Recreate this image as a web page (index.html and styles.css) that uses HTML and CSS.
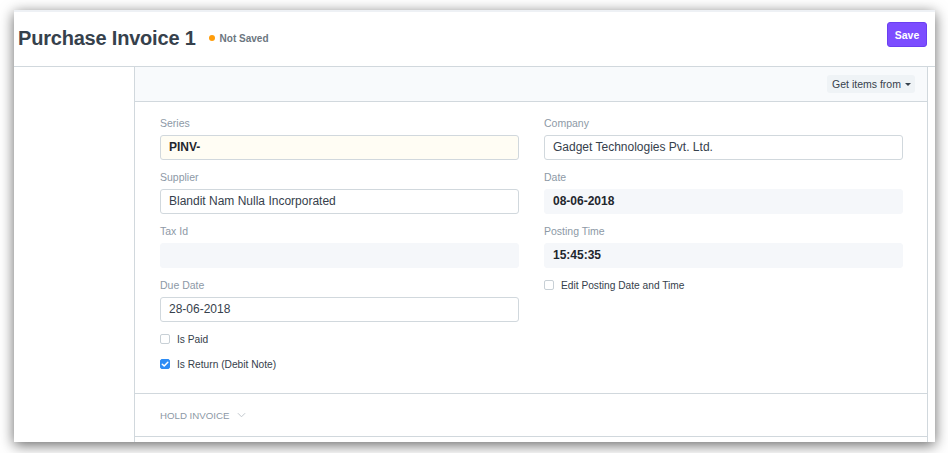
FILE: index.html
```html
<!DOCTYPE html>
<html>
<head>
<meta charset="utf-8">
<link rel="stylesheet" href="styles.css">
</head>
<body>
<div class="window">
  <header class="page-head">
    <div class="title-wrap">
      <h1 class="title">Purchase Invoice 1</h1>
      <span class="indicator"><span class="dot"></span>Not Saved</span>
    </div>
    <button class="btn-primary">Save</button>
  </header>
  <div class="page-body">
    <aside class="sidebar"></aside>
    <main class="layout-main">
      <div class="form-toolbar">
        <button class="btn-default">Get items from <span class="caret"></span></button>
      </div>
      <section class="form-section">
        <div class="col">
          <div class="field">
            <div class="label">Series</div>
            <div class="input input-req bold">PINV-</div>
          </div>
          <div class="field">
            <div class="label">Supplier</div>
            <div class="input">Blandit Nam Nulla Incorporated</div>
          </div>
          <div class="field">
            <div class="label">Tax Id</div>
            <div class="input input-ro"></div>
          </div>
          <div class="field">
            <div class="label">Due Date</div>
            <div class="input">28-06-2018</div>
          </div>
          <div class="check-row"><span class="checkbox"></span>Is Paid</div>
          <div class="check-row"><span class="checkbox checked"><svg viewBox="0 0 10 10" width="10" height="10"><path d="M2.3 5.2 L4.2 7 L7.8 3.2" fill="none" stroke="#fff" stroke-width="1.5" stroke-linecap="round" stroke-linejoin="round"/></svg></span>Is Return (Debit Note)</div>
        </div>
        <div class="col">
          <div class="field">
            <div class="label">Company</div>
            <div class="input">Gadget Technologies Pvt. Ltd.</div>
          </div>
          <div class="field">
            <div class="label">Date</div>
            <div class="input input-ro bold">08-06-2018</div>
          </div>
          <div class="field">
            <div class="label">Posting Time</div>
            <div class="input input-ro bold">15:45:35</div>
          </div>
          <div class="check-row"><span class="checkbox"></span>Edit Posting Date and Time</div>
        </div>
      </section>
      <section class="collapsed-section">
        <span class="section-head">HOLD INVOICE</span>
        <svg class="chevron" viewBox="0 0 10 6" width="9" height="6"><path d="M1 1 L5 5 L9 1" fill="none" stroke="#c0c6cc" stroke-width="1.1"/></svg>
      </section>
      <section class="next-section"></section>
    </main>
    <div class="gutter"></div>
  </div>
</div>
</body>
</html>
```
FILE: styles.css
```css
* { box-sizing: border-box; }
html, body { margin: 0; padding: 0; background: #ffffff; }
body {
  font-family: "Liberation Sans", Arial, sans-serif;
  color: #36414c;
  width: 948px;
  height: 453px;
  overflow: hidden;
}
.window {
  margin: 10px 0 0 14px;
  width: 921px;
  height: 432px;
  background: #fff;
  border-top: 2px solid #eef1f5;
  box-shadow: 0 3px 13px rgba(0, 0, 0, 0.6);
  overflow: hidden;
  display: flex;
  flex-direction: column;
}
.page-head {
  height: 55px;
  flex: none;
  border-bottom: 1px solid #d1d8dd;
  display: flex;
  justify-content: space-between;
  align-items: flex-start;
  padding: 10px 8px 0 4px;
}
.title-wrap {
  display: flex;
  align-items: center;
  margin-top: 4px;
}
.title {
  margin: 0;
  font-size: 20px;
  line-height: 24px;
  font-weight: 700;
  color: #36414c;
  letter-spacing: -0.2px;
}
.indicator {
  display: flex;
  align-items: center;
  margin-left: 13px;
  font-size: 10px;
  font-weight: 700;
  color: #6c7680;
}
.dot {
  width: 6px;
  height: 6px;
  border-radius: 50%;
  background: #ff9d0a;
  margin-right: 5px;
}
.btn-primary {
  width: 40px;
  height: 25px;
  border: 1px solid #6a3ff0;
  border-radius: 3px;
  background: #7c4dff;
  color: #fff;
  font-family: inherit;
  font-size: 10.5px;
  font-weight: 700;
  padding: 0;
}
.page-body {
  flex: 1;
  display: flex;
  min-height: 0;
}
.sidebar { width: 120px; flex: none; }
.gutter { width: 7px; flex: none; }
.layout-main {
  flex: 1;
  border-left: 1px solid #d1d8dd;
  border-right: 1px solid #d1d8dd;
  display: flex;
  flex-direction: column;
}
.form-toolbar {
  height: 35px;
  flex: none;
  background: #f8fafc;
  border-bottom: 1px solid #d1d8dd;
  display: flex;
  justify-content: flex-end;
  align-items: center;
  padding-right: 12px;
}
.btn-default {
  height: 18px;
  width: 88px;
  border: none;
  border-radius: 3px;
  background: #eff3f6;
  color: #36414c;
  font-family: inherit;
  font-size: 10.5px;
  padding: 0 0 0 1px;
  display: flex;
  align-items: center;
  justify-content: center;
}
.caret {
  display: inline-block;
  margin-left: 4px;
  width: 0;
  height: 0;
  border-left: 3.5px solid transparent;
  border-right: 3.5px solid transparent;
  border-top: 3.5px solid #36414c;
}
.form-section {
  flex: none;
  display: grid;
  grid-template-columns: 1fr 1fr;
  column-gap: 25px;
  padding: 13px 24px 12px 25px;
  border-bottom: 1px solid #d1d8dd;
}
.field { margin-bottom: 9px; }
.label {
  font-size: 10.5px;
  line-height: 16px;
  color: #8d99a6;
  margin-bottom: 4px;
}
.input {
  height: 25px;
  border: 1px solid #d1d8dd;
  border-radius: 3px;
  background: #fff;
  font-size: 12px;
  line-height: 23px;
  padding: 0 8px;
  color: #36414c;
}
.input-req { background: #fffdf4; }
.input-ro { background: #f5f7fa; border-color: #f5f7fa; }
.bold { font-weight: 700; color: #1f272e; }
.check-row {
  display: flex;
  align-items: center;
  height: 16px;
  margin-bottom: 9px;
  font-size: 10.2px;
  color: #36414c;
}
.checkbox {
  width: 10px;
  height: 10px;
  border: 1px solid #c8d0d6;
  border-radius: 2px;
  background: #fff;
  margin-right: 7px;
  display: flex;
  align-items: center;
  justify-content: center;
}
.checkbox.checked {
  background: #2d8cf5;
  border-color: #2d8cf5;
}
.checkbox svg { flex: none; }
.collapsed-section {
  height: 43px;
  flex: none;
  border-bottom: 1px solid #d1d8dd;
  display: flex;
  align-items: center;
  padding-left: 25px;
}
.section-head {
  font-size: 9.7px;
  color: #8d99a6;
}
.chevron { margin-left: 8px; }
.next-section { flex: 1; }
```
